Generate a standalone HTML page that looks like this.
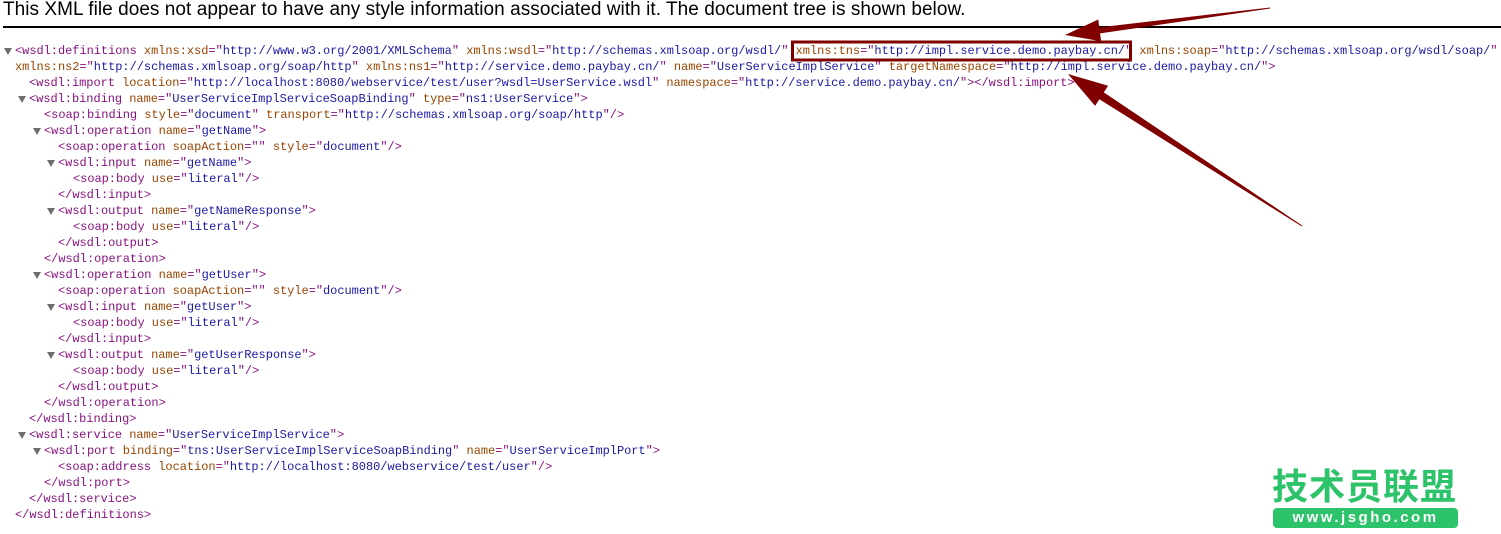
<!DOCTYPE html>
<html><head><meta charset="utf-8"><style>
body{margin:0;width:1501px;height:534px;background:#fff;position:relative;overflow:hidden;font-family:"Liberation Mono",monospace;}
.hdr{position:absolute;left:3px;top:-1px;font:19px "Liberation Sans",sans-serif;color:#000;white-space:nowrap;letter-spacing:0.05px}
.rule{position:absolute;left:3px;right:0;top:26px;height:2px;background:#000}
.l{position:absolute;font-size:12px;line-height:16px;white-space:nowrap;color:#881280;letter-spacing:-0.04px}
.a{color:#994500}.v{color:#1a1aa6}
.t{position:absolute;width:0;height:0;border-left:4px solid transparent;border-right:4px solid transparent;border-top:7px solid #6e6e6e}
.logo{position:absolute;left:1272px;top:462px;font:bold 36px "Noto Sans CJK SC",sans-serif;color:#2dc36a;letter-spacing:1px;line-height:44px}
.pill{position:absolute;left:1273px;top:508px;width:185px;height:20px;border-radius:4px;background:#2dc36a;color:#fff;font:bold 15px "Liberation Sans",sans-serif;text-align:center;line-height:20px;letter-spacing:2.5px}
</style></head><body>
<div class="hdr">This XML file does not appear to have any style information associated with it. The document tree is shown below.</div>
<div class="rule"></div>

<div class="t" style="left:4px;top:48px"></div>
<div class="l" style="left:15px;top:43px">&lt;wsdl:definitions <span class="a">xmlns:xsd</span>="<span class="v">http://www.w3.org/2001/XMLSchema</span>" <span class="a">xmlns:wsdl</span>="<span class="v">http://schemas.xmlsoap.org/wsdl/</span>" <span class="a">xmlns:tns</span>="<span class="v">http://impl.service.demo.paybay.cn/</span>" <span class="a">xmlns:soap</span>="<span class="v">http://schemas.xmlsoap.org/wsdl/soap/</span>"</div>
<div class="l" style="left:15px;top:59px"><span class="a">xmlns:ns2</span>="<span class="v">http://schemas.xmlsoap.org/soap/http</span>" <span class="a">xmlns:ns1</span>="<span class="v">http://service.demo.paybay.cn/</span>" <span class="a">name</span>="<span class="v">UserServiceImplService</span>" <span class="a">targetNamespace</span>="<span class="v">http://impl.service.demo.paybay.cn/</span>"&gt;</div>
<div class="l" style="left:29px;top:75px">&lt;wsdl:import <span class="a">location</span>="<span class="v">http://localhost:8080/webservice/test/user?wsdl=UserService.wsdl</span>" <span class="a">namespace</span>="<span class="v">http://service.demo.paybay.cn/</span>"&gt;&lt;/wsdl:import&gt;</div>
<div class="t" style="left:18px;top:96px"></div>
<div class="l" style="left:29px;top:91px">&lt;wsdl:binding <span class="a">name</span>="<span class="v">UserServiceImplServiceSoapBinding</span>" <span class="a">type</span>="<span class="v">ns1:UserService</span>"&gt;</div>
<div class="l" style="left:44px;top:107px">&lt;soap:binding <span class="a">style</span>="<span class="v">document</span>" <span class="a">transport</span>="<span class="v">http://schemas.xmlsoap.org/soap/http</span>"/&gt;</div>
<div class="t" style="left:33px;top:128px"></div>
<div class="l" style="left:44px;top:123px">&lt;wsdl:operation <span class="a">name</span>="<span class="v">getName</span>"&gt;</div>
<div class="l" style="left:58px;top:139px">&lt;soap:operation <span class="a">soapAction</span>="" <span class="a">style</span>="<span class="v">document</span>"/&gt;</div>
<div class="t" style="left:47px;top:160px"></div>
<div class="l" style="left:58px;top:155px">&lt;wsdl:input <span class="a">name</span>="<span class="v">getName</span>"&gt;</div>
<div class="l" style="left:73px;top:171px">&lt;soap:body <span class="a">use</span>="<span class="v">literal</span>"/&gt;</div>
<div class="l" style="left:58px;top:187px">&lt;/wsdl:input&gt;</div>
<div class="t" style="left:47px;top:208px"></div>
<div class="l" style="left:58px;top:203px">&lt;wsdl:output <span class="a">name</span>="<span class="v">getNameResponse</span>"&gt;</div>
<div class="l" style="left:73px;top:219px">&lt;soap:body <span class="a">use</span>="<span class="v">literal</span>"/&gt;</div>
<div class="l" style="left:58px;top:235px">&lt;/wsdl:output&gt;</div>
<div class="l" style="left:44px;top:251px">&lt;/wsdl:operation&gt;</div>
<div class="t" style="left:33px;top:272px"></div>
<div class="l" style="left:44px;top:267px">&lt;wsdl:operation <span class="a">name</span>="<span class="v">getUser</span>"&gt;</div>
<div class="l" style="left:58px;top:283px">&lt;soap:operation <span class="a">soapAction</span>="" <span class="a">style</span>="<span class="v">document</span>"/&gt;</div>
<div class="t" style="left:47px;top:304px"></div>
<div class="l" style="left:58px;top:299px">&lt;wsdl:input <span class="a">name</span>="<span class="v">getUser</span>"&gt;</div>
<div class="l" style="left:73px;top:315px">&lt;soap:body <span class="a">use</span>="<span class="v">literal</span>"/&gt;</div>
<div class="l" style="left:58px;top:331px">&lt;/wsdl:input&gt;</div>
<div class="t" style="left:47px;top:352px"></div>
<div class="l" style="left:58px;top:347px">&lt;wsdl:output <span class="a">name</span>="<span class="v">getUserResponse</span>"&gt;</div>
<div class="l" style="left:73px;top:363px">&lt;soap:body <span class="a">use</span>="<span class="v">literal</span>"/&gt;</div>
<div class="l" style="left:58px;top:379px">&lt;/wsdl:output&gt;</div>
<div class="l" style="left:44px;top:395px">&lt;/wsdl:operation&gt;</div>
<div class="l" style="left:29px;top:411px">&lt;/wsdl:binding&gt;</div>
<div class="t" style="left:18px;top:432px"></div>
<div class="l" style="left:29px;top:427px">&lt;wsdl:service <span class="a">name</span>="<span class="v">UserServiceImplService</span>"&gt;</div>
<div class="t" style="left:33px;top:448px"></div>
<div class="l" style="left:44px;top:443px">&lt;wsdl:port <span class="a">binding</span>="<span class="v">tns:UserServiceImplServiceSoapBinding</span>" <span class="a">name</span>="<span class="v">UserServiceImplPort</span>"&gt;</div>
<div class="l" style="left:58px;top:459px">&lt;soap:address <span class="a">location</span>="<span class="v">http://localhost:8080/webservice/test/user</span>"/&gt;</div>
<div class="l" style="left:44px;top:475px">&lt;/wsdl:port&gt;</div>
<div class="l" style="left:29px;top:491px">&lt;/wsdl:service&gt;</div>
<div class="l" style="left:15px;top:507px">&lt;/wsdl:definitions&gt;</div>

<svg style="position:absolute;left:0;top:0" width="1501" height="534">
<rect x="792.5" y="42" width="338" height="18" fill="none" stroke="#800000" stroke-width="3"/>
<polygon fill="#800000" points="1269.9,7.5 1099.3,27.4 1098.3,19.5 1065,35 1101.1,41.3 1100.1,33.4 1270.1,8.5"/>
<polygon fill="#800000" points="1302.3,225.6 1103.8,92.4 1108.1,85.7 1068,74 1095.1,105.9 1099.4,99.2 1301.7,226.4"/>
</svg>

<div class="logo">技术员联盟</div>
<div class="pill">www.jsgho.com</div>
</body></html>
